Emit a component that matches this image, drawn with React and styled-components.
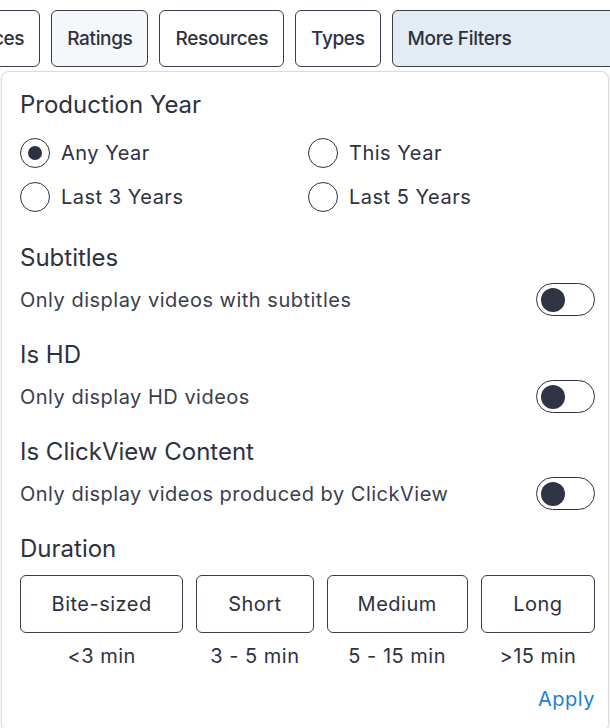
import React, { useState } from 'react'
import styled, { createGlobalStyle } from 'styled-components'

const Global = createGlobalStyle`
  html, body {
    margin: 0;
    padding: 0;
    background: #fff;
    overflow: hidden;
  }
  body {
    font-family: Inter, "Noto Sans", "Liberation Sans", sans-serif;
    color: #2d3142;
  }
`

const Page = styled.div`
  width: 610px;
  height: 728px;
  overflow: hidden;
  position: relative;
`

const Toolbar = styled.div`
  display: flex;
  gap: 11px;
  margin-left: -85px;
  padding-top: 10px;
  white-space: nowrap;
`

const FilterButton = styled.button`
  flex: none;
  height: 57px;
  padding: 0 15px;
  border: 1px solid #3a3e4c;
  border-radius: 6px;
  background: ${p => (p.$open ? '#e4ecf3' : p.$active ? '#f4f8fb' : '#fff')};
  font-family: inherit;
  font-size: 19px;
  font-weight: 500;
  letter-spacing: -0.35px;
  color: #2d3142;
  min-width: ${p => (p.$open ? '240px' : 'auto')};
  text-align: left;
`

const Panel = styled.div`
  margin: 4px 0 0 1px;
  width: 608px;
  box-sizing: border-box;
  border: 1px solid #d9dbe0;
  border-radius: 8px;
  box-shadow: 0 2px 6px rgba(0, 0, 0, 0.08);
  padding: 19px 13px 20px 18px;
  background: #fff;
  letter-spacing: 0.5px;
`

const Section = styled.div`
  margin-bottom: ${p => p.$gap ?? 25}px;
`

const Title = styled.h3`
  margin: 0;
  font-size: 24px;
  line-height: 28px;
  font-weight: 400;
  letter-spacing: 0;
  color: #2d3142;
`

const RadioGrid = styled.div`
  display: grid;
  grid-template-columns: 288px 1fr;
  row-gap: 14px;
  margin-top: 19px;
`

const RadioLabel = styled.label`
  display: flex;
  align-items: center;
  gap: 11px;
  height: 30px;
  font-size: 20px;
  color: #2d3142;
  cursor: pointer;
`

const Circle = styled.span`
  width: 30px;
  height: 30px;
  box-sizing: border-box;
  border: 1.5px solid #2d3142;
  border-radius: 50%;
  display: flex;
  align-items: center;
  justify-content: center;

  &::after {
    content: '';
    width: 14px;
    height: 14px;
    border-radius: 50%;
    background: ${p => (p.$checked ? '#2d3142' : 'transparent')};
  }
`

const ToggleRow = styled.div`
  display: flex;
  align-items: center;
  justify-content: space-between;
  margin-top: 11px;
  height: 33px;
`

const Description = styled.span`
  font-size: 20px;
  color: #3a3e4c;
`

const Toggle = styled.button`
  width: 59px;
  height: 33px;
  box-sizing: border-box;
  border: 1px solid #2d3142;
  border-radius: 17px;
  background: #fff;
  padding: 0 4px;
  display: flex;
  align-items: center;
  justify-content: ${p => (p.$on ? 'flex-end' : 'flex-start')};
  cursor: pointer;

  &::after {
    content: '';
    width: 24px;
    height: 24px;
    border-radius: 50%;
    background: #2f3445;
  }
`

const DurationGrid = styled.div`
  display: grid;
  grid-template-columns: 163fr 117fr 141fr 114fr;
  column-gap: 13px;
  margin-top: 12px;
`

const DurationItem = styled.div`
  display: flex;
  flex-direction: column;
  align-items: stretch;
  gap: 11px;
`

const DurationButton = styled.button`
  height: 58px;
  border: 1px solid #3a3e4c;
  border-radius: 6px;
  background: ${p => (p.$selected ? '#e4ecf3' : '#fff')};
  font-family: inherit;
  font-size: 20px;
  letter-spacing: 0.5px;
  color: #2d3142;
  cursor: pointer;
`

const DurationHint = styled.span`
  text-align: center;
  font-size: 20px;
  line-height: 24px;
  color: #2d3142;
`

const Footer = styled.div`
  display: flex;
  justify-content: flex-end;
  margin-top: 19px;
`

const ApplyLink = styled.button`
  border: none;
  background: none;
  padding: 0;
  font-family: inherit;
  font-size: 20px;
  line-height: 24px;
  letter-spacing: 0.5px;
  color: #1a80d9;
  cursor: pointer;
`

const years = ['Any Year', 'This Year', 'Last 3 Years', 'Last 5 Years']

const toggles = [
  { title: 'Subtitles', text: 'Only display videos with subtitles' },
  { title: 'Is HD', text: 'Only display HD videos' },
  { title: 'Is ClickView Content', text: 'Only display videos produced by ClickView' },
]

const durations = [
  { label: 'Bite-sized', hint: '<3 min' },
  { label: 'Short', hint: '3 - 5 min' },
  { label: 'Medium', hint: '5 - 15 min' },
  { label: 'Long', hint: '>15 min' },
]

export default function App() {
  const [year, setYear] = useState('Any Year')
  const [flags, setFlags] = useState({})
  const [duration, setDuration] = useState(null)

  return (
    <Page>
      <Global />
      <Toolbar>
        <FilterButton>Audiences</FilterButton>
        <FilterButton $active>Ratings</FilterButton>
        <FilterButton>Resources</FilterButton>
        <FilterButton>Types</FilterButton>
        <FilterButton $open>More Filters</FilterButton>
      </Toolbar>

      <Panel>
        <Section $gap={32}>
          <Title>Production Year</Title>
          <RadioGrid>
            {years.map(y => (
              <RadioLabel key={y} onClick={() => setYear(y)}>
                <Circle $checked={year === y} />
                {y}
              </RadioLabel>
            ))}
          </RadioGrid>
        </Section>

        {toggles.map(t => (
          <Section key={t.title}>
            <Title>{t.title}</Title>
            <ToggleRow>
              <Description>{t.text}</Description>
              <Toggle
                $on={!!flags[t.title]}
                onClick={() => setFlags(f => ({ ...f, [t.title]: !f[t.title] }))}
              />
            </ToggleRow>
          </Section>
        ))}

        <Section $gap={0}>
          <Title>Duration</Title>
          <DurationGrid>
            {durations.map(d => (
              <DurationItem key={d.label}>
                <DurationButton
                  $selected={duration === d.label}
                  onClick={() => setDuration(d.label)}
                >
                  {d.label}
                </DurationButton>
                <DurationHint>{d.hint}</DurationHint>
              </DurationItem>
            ))}
          </DurationGrid>
        </Section>

        <Footer>
          <ApplyLink>Apply</ApplyLink>
        </Footer>
      </Panel>
    </Page>
  )
}
